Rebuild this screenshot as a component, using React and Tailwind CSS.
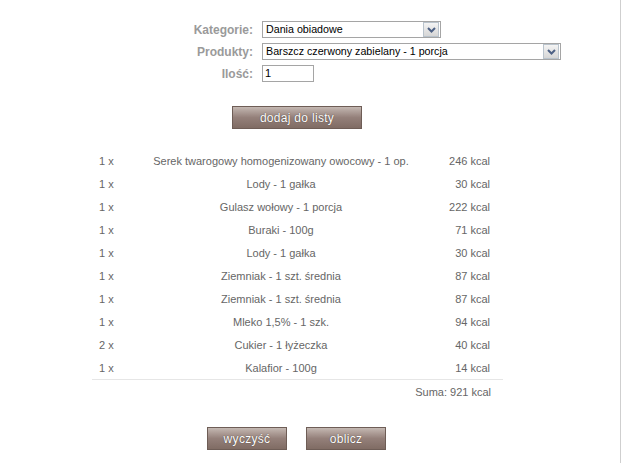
import React from "react";

const items = [
  { qty: "1 x", name: "Serek twarogowy homogenizowany owocowy - 1 op.", kcal: "246 kcal" },
  { qty: "1 x", name: "Lody - 1 gałka", kcal: "30 kcal" },
  { qty: "1 x", name: "Gulasz wołowy - 1 porcja", kcal: "222 kcal" },
  { qty: "1 x", name: "Buraki - 100g", kcal: "71 kcal" },
  { qty: "1 x", name: "Lody - 1 gałka", kcal: "30 kcal" },
  { qty: "1 x", name: "Ziemniak - 1 szt. średnia", kcal: "87 kcal" },
  { qty: "1 x", name: "Ziemniak - 1 szt. średnia", kcal: "87 kcal" },
  { qty: "1 x", name: "Mleko 1,5% - 1 szk.", kcal: "94 kcal" },
  { qty: "2 x", name: "Cukier - 1 łyżeczka", kcal: "40 kcal" },
  { qty: "1 x", name: "Kalafior - 100g", kcal: "14 kcal" },
];

function Arrow() {
  return (
    <div className="w-[16px] h-[15px] border border-[#b9c3cc] bg-gradient-to-b from-[#f4f4f4] to-[#d6d6d6] flex items-center justify-center">
      <svg width="9" height="6" viewBox="0 0 9 6">
        <path d="M1 1 L4.5 4.5 L8 1" stroke="#4d6185" strokeWidth="2" fill="none" />
      </svg>
    </div>
  );
}

function Select({ value, width }) {
  return (
    <div className={`${width} h-[17px] border border-[#a5a5a5] bg-white flex items-center justify-between pl-[3px] pr-[1px]`}>
      <span className="text-[10.7px] text-black leading-none">{value}</span>
      <Arrow />
    </div>
  );
}

function BrownButton({ children, width }) {
  return (
    <button
      className={`${width} h-[23px] border border-[#6e5d56] bg-gradient-to-b from-[#c4b8b2] via-[#94807a] to-[#806c64] text-white text-[12px] leading-none [text-shadow:0_0_1px_#3a2c26] tracking-[0.3px]`}
    >
      {children}
    </button>
  );
}

export default function App() {
  return (
    <div className="w-[621px] h-[463px] bg-white border-r border-[#cfcfcf] font-['Liberation_Sans',Arial,sans-serif] overflow-hidden">
      {/* Form */}
      <div className="pt-[21px] pl-[190px] flex flex-col gap-[5px]">
        <div className="flex items-center gap-[9px] h-[17px]">
          <span className="w-[63px] text-right text-[12px] leading-none font-bold text-[#9a9a9a]">Kategorie:</span>
          <Select value="Dania obiadowe" width="w-[179px]" />
        </div>
        <div className="flex items-center gap-[9px] h-[17px]">
          <span className="w-[63px] text-right text-[12px] leading-none font-bold text-[#9a9a9a]">Produkty:</span>
          <Select value="Barszcz czerwony zabielany - 1 porcja" width="w-[299px]" />
        </div>
        <div className="flex items-center gap-[9px] h-[17px]">
          <span className="w-[63px] text-right text-[12px] leading-none font-bold text-[#9a9a9a]">Ilość:</span>
          <div className="w-[52px] h-[17px] border border-[#a5a5a5] bg-white flex items-center pl-[2px]">
            <span className="text-[11px] text-black leading-none">1</span>
          </div>
        </div>
      </div>

      <div className="mt-[24px] pl-[232px] flex">
        <BrownButton width="w-[130px]">dodaj do listy</BrownButton>
      </div>

      {/* List */}
      <div className="mt-[21px] ml-[92px] w-[411px] text-[11px] text-[#666]">
        {items.map((it, i) => (
          <div
            key={i}
            className={`grid grid-cols-[50px_278px_83px] h-[23px] items-center ${
              i === items.length - 1 ? "border-b border-[#e6e6e6]" : ""
            }`}
          >
            <span className="pl-[7px]">{it.qty}</span>
            <span className="text-center">{it.name}</span>
            <span className="text-right pr-[13px]">{it.kcal}</span>
          </div>
        ))}
        <div className="h-[24px] flex items-center justify-end pr-[12px]">Suma: 921 kcal</div>
      </div>

      <div className="mt-[23px] pl-[207px] flex gap-[19px]">
        <BrownButton width="w-[80px]">wyczyść</BrownButton>
        <BrownButton width="w-[80px]">oblicz</BrownButton>
      </div>
    </div>
  );
}
